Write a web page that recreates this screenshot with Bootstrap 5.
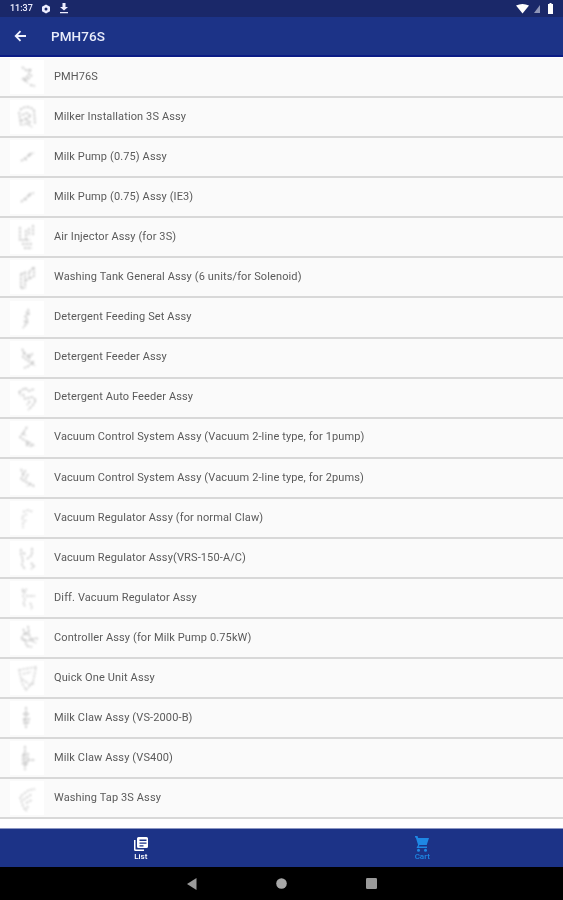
<!DOCTYPE html>
<html lang="en">
<head>
<meta charset="utf-8">
<title>PMH76S</title>
<link href="https://cdn.jsdelivr.net/npm/bootstrap@5.3.0/dist/css/bootstrap.min.css" rel="stylesheet">
<style>
html,body{height:900px;overflow:hidden}
body{font-family:Roboto,"Liberation Sans",sans-serif;background:#fff}
.shell{height:900px;width:563px;overflow:hidden}
.statusbar{height:17px;background:#1a2869;color:#eef;font-size:9px;font-weight:500;padding:0 10px 0 10px}
.statusbar span,.appname,.rowtext,.tablabel{filter:blur(.4px)}
.appbar{height:38px;background:#1c3387;color:#e9edfb;padding-left:14px;gap:24px}
.appname{font-size:13.5px;font-weight:500;letter-spacing:.1px}
.appline{height:2px;background:#0b1c85}
.listarea{height:771px;overflow:hidden;background:#fff;padding-top:1px}
.partrow{height:40.08px;background:#fafafa;border-bottom:2px solid #d8d8d8;padding-left:10px;gap:10px}
.thumb{width:34px;height:34px;background:#fff;flex:none}
.thumb svg{width:34px;height:34px;fill:none;stroke:#bdbdbd;stroke-width:1.4;stroke-dasharray:2.5 1.200;filter:blur(.9px)}
.rowtext{font-size:11px;color:#5a5a5a;letter-spacing:.12px}
.tabbar{height:39px;background:#1c3387;border-top:1px solid #8d97c4}
.tabitem{width:50%;line-height:1}
.tablabel{font-size:8px;margin-top:1px;font-weight:500}
.tabon{color:#fff}
.taboff{color:#1e88e5}
.navkeys{height:33px;background:#000;gap:79px;padding-right:0}
</style>
</head>
<body>
<div class="shell d-flex flex-column">
  <div class="statusbar d-flex align-items-center">
    <span>11:37</span>
    <svg class="ms-2" width="10" height="10" viewBox="0 0 10 10"><path d="M5 .5 9 2.7v4.6L5 9.500 1 7.300V2.700z" fill="#eef"/><circle cx="5" cy="5" r="1.500" fill="#1a2869"/></svg>
    <svg class="ms-2" width="10" height="11" viewBox="0 0 10 11"><path d="M3.500 0h3v4H9L5 7.500 1 4h2.500zM1 9h8v1.300H1z" fill="#eef"/></svg>
    <svg class="ms-auto" width="14" height="10" viewBox="0 0 14 10"><path d="M0 1.500Q6.500-1.500 13 1.500L6.500 9.500z" fill="#fff"/></svg>
    <svg class="ms-1" width="6" height="8" viewBox="0 0 6 8"><path d="M6 0v8H0z" fill="#8f96b8"/></svg>
    <svg class="ms-2" width="5" height="11" viewBox="0 0 5 11"><path d="M1.500 0h2v1H5v10H0V1h1.500z" fill="#fff"/></svg>
  </div>
  <div class="appbar d-flex align-items-center">
    <svg width="13" height="12" viewBox="0 0 13 12"><path d="M12 6H2M6.500 1.200 1.700 6l4.800 4.800" fill="none" stroke="#f0f3ff" stroke-width="1.800"/></svg>
    <span class="appname">PMH76S</span>
  </div>
  <div class="appline"></div>
  <div class="listarea">
    <div class="partrow d-flex align-items-center"><div class="thumb"><svg viewBox="0 0 34 34"><path d="M12 7l5 4 4-2-3 7-5 3 4 1 5-5M14 20l4 3M20 25l5 1"/></svg></div><span class="rowtext">PMH76S</span></div>
    <div class="partrow d-flex align-items-center"><div class="thumb"><svg viewBox="0 0 34 34"><path d="M10 10q7-6 14 0M9 12l2 14M24 10l1 14M12 15l5-2 4 3-6 3 5 3-7 3M18 24l4 3M11 20l3 1"/></svg></div><span class="rowtext">Milker Installation 3S Assy</span></div>
    <div class="partrow d-flex align-items-center"><div class="thumb"><svg viewBox="0 0 34 34"><path d="M11 21l6-4 3-3 4-1M15 18l2 3M19 14l1 3"/></svg></div><span class="rowtext">Milk Pump (0.75) Assy</span></div>
    <div class="partrow d-flex align-items-center"><div class="thumb"><svg viewBox="0 0 34 34"><path d="M11 22l6-5 3-3 4-1M15 18l2 3M19 14l1 3"/></svg></div><span class="rowtext">Milk Pump (0.75) Assy (IE3)</span></div>
    <div class="partrow d-flex align-items-center"><div class="thumb"><svg viewBox="0 0 34 34"><path d="M10 7v13h10M16 10v10M23 5v11M19 8v8M12 24h10M14 28h8"/></svg></div><span class="rowtext">Air Injector Assy (for 3S)</span></div>
    <div class="partrow d-flex align-items-center"><div class="thumb"><svg viewBox="0 0 34 34"><path d="M11 14v14M15 12v16M11 14l5-2M19 12l5-5v9l-5 3zM11 28h4M15 20h4"/></svg></div><span class="rowtext">Washing Tank General Assy (6 units/for Solenoid)</span></div>
    <div class="partrow d-flex align-items-center"><div class="thumb"><svg viewBox="0 0 34 34"><path d="M18 8l1 4-4 4 3 3-2 4-3 4M16 11l3 3M14 20l4 2"/></svg></div><span class="rowtext">Detergent Feeding Set Assy</span></div>
    <div class="partrow d-flex align-items-center"><div class="thumb"><svg viewBox="0 0 34 34"><path d="M12 8l4 6 3 3 4-5M14 11l-1 5 5 4 5 1-4 4-5 2M22 22l3 3M19 13v5"/></svg></div><span class="rowtext">Detergent Feeder Assy</span></div>
    <div class="partrow d-flex align-items-center"><div class="thumb"><svg viewBox="0 0 34 34"><path d="M9 11l6-4 4 3 5-2M13 13l2 5 7-2 4 3-3 5-5 5M20 20l-3 4M9 11l2 4"/></svg></div><span class="rowtext">Detergent Auto Feeder Assy</span></div>
    <div class="partrow d-flex align-items-center"><div class="thumb"><svg viewBox="0 0 34 34"><path d="M17 6l-4 6-3 4 4 3 6 3 5 3M13 12l3 3M18 21l-2 3 6 1"/></svg></div><span class="rowtext">Vacuum Control System Assy (Vacuum 2-line type, for 1pump)</span></div>
    <div class="partrow d-flex align-items-center"><div class="thumb"><svg viewBox="0 0 34 34"><path d="M11 8l2 5 3-4M14 13l-3 5 5 3 5 2 4 3M18 13l-3 6M21 23l-4 2"/></svg></div><span class="rowtext">Vacuum Control System Assy (Vacuum 2-line type, for 2pums)</span></div>
    <div class="partrow d-flex align-items-center"><div class="thumb"><svg viewBox="0 0 34 34" opacity=".7"><path d="M13 11l5-2 5 2M12 16l5-3M16 19l-3 3v5M12 17l1 2"/></svg></div><span class="rowtext">Vacuum Regulator Assy (for normal Claw)</span></div>
    <div class="partrow d-flex align-items-center"><div class="thumb"><svg viewBox="0 0 34 34"><path d="M11 8v6l2 4-1 6 3 4M22 7v7l-5 4M13 12l3 1M21 22l3 3-3 3"/></svg></div><span class="rowtext">Vacuum Regulator Assy(VRS-150-A/C)</span></div>
    <div class="partrow d-flex align-items-center"><div class="thumb"><svg viewBox="0 0 34 34" opacity=".8"><path d="M12 8l3 3-2 4 2 4-2 4 3 3M16 15h9M20 22l2 3-1 4M12 11l5-3"/></svg></div><span class="rowtext">Diff. Vacuum Regulator Assy</span></div>
    <div class="partrow d-flex align-items-center"><div class="thumb"><svg viewBox="0 0 34 34"><path d="M18 5l1 7-5 1-3 5 7 2 7-3 4 1M13 8l4 7M19 13l2 6 5 3M14 18l3 7 5 1"/></svg></div><span class="rowtext">Controller Assy (for Milk Pump 0.75kW)</span></div>
    <div class="partrow d-flex align-items-center"><div class="thumb"><svg viewBox="0 0 34 34" opacity=".75"><path d="M9 9l17-3-3 15-7 8-4-7zM13 13l8-2M12 18l7 5M24 22l-5 3"/></svg></div><span class="rowtext">Quick One Unit Assy</span></div>
    <div class="partrow d-flex align-items-center"><div class="thumb"><svg viewBox="0 0 34 34"><path d="M16 6v22M13 13h6M14 18h5l-1 4h-4z"/></svg></div><span class="rowtext">Milk Claw Assy (VS-2000-B)</span></div>
    <div class="partrow d-flex align-items-center"><div class="thumb"><svg viewBox="0 0 34 34"><path d="M15 5v24M13 13h5l-1 10h-4zM18 19h7"/></svg></div><span class="rowtext">Milk Claw Assy (VS400)</span></div>
    <div class="partrow d-flex align-items-center"><div class="thumb"><svg viewBox="0 0 34 34" opacity=".85"><path d="M11 15l8-6 6-1M13 19l9-6M10 16l3 9 3 5M16 22l6-3M18 25l-2 5"/></svg></div><span class="rowtext">Washing Tap 3S Assy</span></div>
  </div>
  <div class="tabbar d-flex">
    <div class="tabitem d-flex flex-column align-items-center justify-content-center tabon">
      <svg width="16" height="16" viewBox="0 0 16 16"><path d="M1 4v9.500Q1 15 2.500 15H11v-1.500H3Q2.500 13.500 2.500 13V4z" fill="#fff"/><path d="M5.500 1h8Q15 1 15 2.500v8q0 1.500-1.500 1.500h-8Q4 12 4 10.500v-8Q4 1 5.500 1zM6.500 3.500v1.500h7V3.500zm0 3v1.300h7V6.500zm0 2.700V10.500h4V9.200z" fill="#fff" fill-rule="evenodd"/></svg>
      <div class="tablabel">List</div>
    </div>
    <div class="tabitem d-flex flex-column align-items-center justify-content-center taboff">
      <svg width="16" height="16" viewBox="0 0 16 16"><path d="M1 0h2.500l.7 2H15l-2.300 7H5.500l-.8 1.500H13V12H2.500l1.600-3L1.800 1.500H1z" fill="#1e88e5"/><circle cx="4.500" cy="14.300" r="1.500" fill="#1e88e5"/><circle cx="11.500" cy="14.300" r="1.500" fill="#1e88e5"/></svg>
      <div class="tablabel">Cart</div>
    </div>
  </div>
  <div class="navkeys d-flex align-items-center justify-content-center">
    <svg width="10" height="12" viewBox="0 0 10 12"><path d="M9.500 0v12L0 6z" fill="#9a9a9a"/></svg>
    <svg width="11" height="11" viewBox="0 0 11 11"><circle cx="5.500" cy="5.500" r="5.300" fill="#a8a8a8"/></svg>
    <svg width="11" height="11" viewBox="0 0 11 11"><rect width="11" height="11" rx="1.200" fill="#9a9a9a"/></svg>
  </div>
</div>
</body>
</html>
